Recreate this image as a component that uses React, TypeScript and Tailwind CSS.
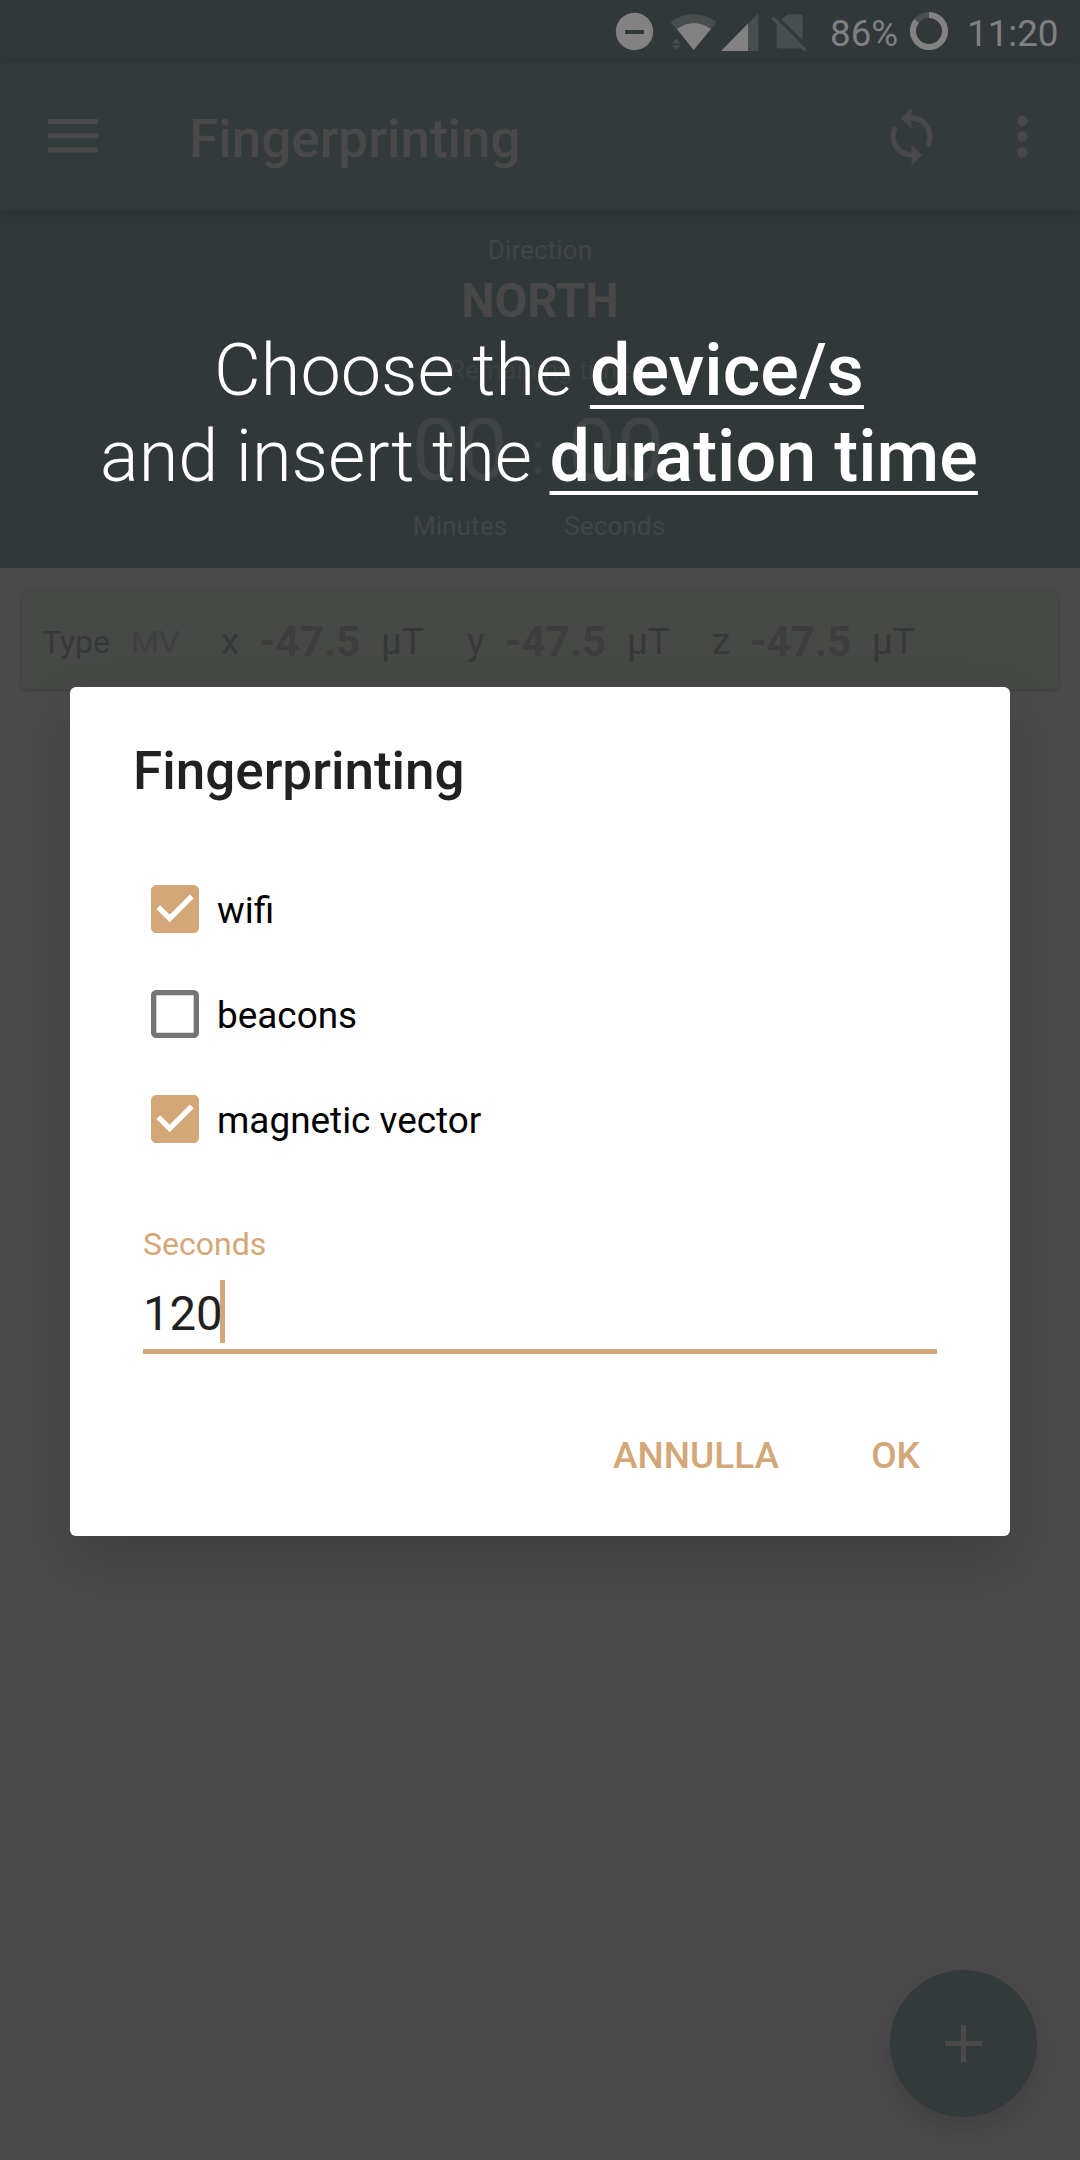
import React from "react";

const readings = [
  { axis: "x", value: "-47.5", width: "w-[246px]" },
  { axis: "y", value: "-47.5", width: "w-[245px]" },
  { axis: "z", value: "-47.5", width: "w-[245px]" },
];

const sensors = [
  { label: "wifi", checked: true },
  { label: "beacons", checked: false },
  { label: "magnetic vector", checked: true },
];

function StatusBar() {
  return (
    <div className="flex h-[63px] items-start bg-[#31383a] pl-[615px] text-[36.75px] leading-[67px] text-[#808080]">
      <svg className="h-[63px] w-[213px] shrink-0" viewBox="615 0 213 63">
        <circle cx="634.5" cy="31.5" r="18.7" fill="#828282" />
        <rect x="625" y="30" width="19" height="4" fill="#31383a" />
        <path d="M670.5 22Q693.7 6 716.5 22L693.7 50Z" fill="#484d4d" />
        <path d="M677 29Q693.7 17 711 29L693.7 50Z" fill="#828282" />
        <path d="M672 43.5l4.3-5 4.3 5zM672 45.3h8.600l-4.300 5z" fill="#484d4d" />
        <path d="M721 51L758.500 13V51Z" fill="#484d4d" />
        <path d="M721 51L748 23.500V51Z" fill="#828282" />
        <path d="M781.500 19.500l4.500-4q1.500-1.200 3-1.200h10.700q3 0 3 3V40.500ZM776.500 22L801 48.500H779.500q-3 0-3-3Z" fill="#484d4d" />
        <path d="M773.500 18.500L804.500 49.500" stroke="#484d4d" strokeWidth="3.500" strokeLinecap="round" />
      </svg>
      <span className="w-[82px] pl-[2px]">86%</span>
      <svg className="h-[63px] w-[38px] shrink-0" viewBox="0 0 38 63">
        <circle cx="19" cy="31" r="16" fill="none" stroke="#484d4d" strokeWidth="6" />
        <circle cx="19" cy="31" r="16" fill="none" stroke="#828282" strokeWidth="6" pathLength="100" strokeDasharray="86 14" transform="rotate(-90 19 31)" />
      </svg>
      <span className="pl-[19px]">11:20</span>
    </div>
  );
}

function Toolbar() {
  return (
    <header className="relative z-10 flex h-[147px] items-center bg-[#333a3b] text-[#494949] shadow-[0_4px_9px_rgba(40,40,35,0.3)]">
      <svg className="-mt-px ml-[48px] h-[34px] w-[50px]" viewBox="0 0 50 34" fill="currentColor">
        <path d="M0 0h50v5H0zM0 14.300h50v5H0zM0 28.500h50v5H0z" />
      </svg>
      <h1 className="ml-[91px] mt-[4px] grow text-[53px] font-medium leading-[62px]">Fingerprinting</h1>
      <svg className="mr-[48px] h-[63px] w-[63px]" viewBox="0 0 24 24" fill="currentColor">
        <path d="M12 4V1L8 5l4 4V6c3.310 0 6 2.690 6 6 0 1.010-.25 1.970-.7 2.800l1.460 1.460C19.540 15.030 20 13.570 20 12c0-4.420-3.580-8-8-8zm0 14c-3.310 0-6-2.690-6-6 0-1.010.25-1.970.7-2.800L5.240 7.740C4.460 8.970 4 10.430 4 12c0 4.420 3.580 8 8 8v3l4-4-4-4v3z" />
      </svg>
      <svg className="mr-[26px] h-[63px] w-[63px]" viewBox="0 0 24 24" fill="currentColor">
        <path d="M12 8c1.100 0 2-.9 2-2s-.9-2-2-2-2 .9-2 2 .9 2 2 2zm0 2c-1.100 0-2 .9-2 2s.9 2 2 2 2-.9 2-2-.9-2-2-2zm0 6c-1.100 0-2 .9-2 2s.9 2 2 2 2-.9 2-2-.9-2-2-2z" />
      </svg>
    </header>
  );
}

function DirectionPanel() {
  return (
    <section className="flex h-[358px] flex-col items-center bg-[#31383a] pt-[25px] text-[26.25px] leading-[30px] text-[#414545]">
      <div>Direction</div>
      <div className="mt-[8px] text-[47.25px] font-bold leading-[56px] text-[#484848]">NORTH</div>
      <div className="mt-[26px] text-[#3c4141]">Remaining time</div>
      <div className="mr-[4px] mt-[15px] flex h-[100px] w-[253px] justify-between text-[86px] leading-[100px] text-[#414444]">
        <span>00</span>
        <span className="text-[60px] leading-[106px] text-[#3c4141]">:</span>
        <span>00</span>
      </div>
      <div className="mr-[2px] mt-[11px] flex gap-[57px]">
        <span>Minutes</span>
        <span>Seconds</span>
      </div>
    </section>
  );
}

function ReadingCard() {
  return (
    <section className="mx-[22px] mt-[23px] flex h-[98px] items-center rounded-[5px] bg-[#474946] pl-[20px] text-[36.75px] leading-[44px] text-[#373838] shadow-[0_1px_4px_rgba(0,0,0,0.2)]">
      <span className="mt-[3px] w-[89px] text-[32px]">Type</span>
      <span className="mt-[3px] w-[90px] text-[32px] text-[#3e4040]">MV</span>
      {readings.map((r) => (
        <div key={r.axis} className={"mt-[3px] flex items-center " + r.width}>
          <span className="w-[38px]">{r.axis}</span>
          <span className="w-[122px] text-[42px] font-bold text-[#3c3d3c]">{r.value}</span>
          <span>µT</span>
        </div>
      ))}
    </section>
  );
}

function CheckBox({ checked }: { checked: boolean }) {
  return (
    <svg className="h-[48px] w-[48px]" viewBox="3 3 18 18">
      {checked ? (
        <path d="M19 3H5c-1.110 0-2 .9-2 2v14c0 1.100.89 2 2 2h14c1.110 0 2-.9 2-2V5c0-1.100-.89-2-2-2zm-9 14l-5-5 1.410-1.410L10 14.170l7.590-7.590L19 8l-9 9z" fill="#d3a777" />
      ) : (
        <path d="M19 5v14H5V5h14m0-2H5c-1.100 0-2 .9-2 2v14c0 1.100.9 2 2 2h14c1.100 0 2-.9 2-2V5c0-1.100-.9-2-2-2z" fill="#757575" />
      )}
    </svg>
  );
}

function Dialog() {
  return (
    <section className="absolute left-[70px] top-[686.5px] flex h-[849px] w-[940px] flex-col rounded-[6px] bg-white shadow-[0_24px_60px_rgba(0,0,0,0.14)]">
      <h2 className="ml-[63px] mt-[53.5px] text-[53px] font-medium leading-[62px] text-[#212121]">Fingerprinting</h2>
      <div className="ml-[81px] mt-[54px]">
        {sensors.map((s) => (
          <label key={s.label} className="flex h-[105px] items-center gap-[18px] text-[36.9px] leading-[44px] text-black">
            <CheckBox checked={s.checked} />
            <span className="mt-[5px]">{s.label}</span>
          </label>
        ))}
      </div>
      <div className="ml-[73px] mt-[54px] w-[794px] border-b-[5px] border-[#d3a777]">
        <div className="text-[32px] leading-[38px] text-[#d3a777]">Seconds</div>
        <div className="mt-[17px] flex h-[69px] items-start text-[47.25px] leading-[68px] text-[#212121]">
          <span className="w-[77px]">120</span>
          <span className="h-[63px] w-[5px] bg-[#d3a777]" />
        </div>
      </div>
      <div className="mt-[80px] flex justify-end pr-[90px] text-[37px] font-medium leading-[44px] text-[#d3a777]">
        <span className="mr-[92px]">ANNULLA</span>
        <span>OK</span>
      </div>
    </section>
  );
}

function Caption() {
  return (
    <p className="absolute left-[-1px] top-[328px] w-[1080px] text-center text-[72px] font-light leading-[86px] text-white">
      Choose the{" "}
      <span className="font-medium underline decoration-[4px] underline-offset-[10px] [text-decoration-skip-ink:none]">device/s</span>
      <br />
      and insert the{" "}
      <span className="font-medium underline decoration-[4px] underline-offset-[10px] [text-decoration-skip-ink:none]">duration time</span>
    </p>
  );
}

export default function App() {
  return (
    <main className="relative h-[2160px] w-[1080px] overflow-hidden bg-[#4a4a4a] font-['Roboto',sans-serif]">
      <StatusBar />
      <Toolbar />
      <DirectionPanel />
      <ReadingCard />
      <button className="absolute left-[890px] top-[1970px] flex h-[147px] w-[147px] items-center justify-center rounded-full bg-[#333a3b] shadow-[0_12px_24px_rgba(0,0,0,0.12)]">
        <svg className="h-[37px] w-[37px]" viewBox="0 0 37 37" fill="#4a4a4a">
          <path d="M16 0h5v16h16v5H21v16h-5V21H0v-5h16z" />
        </svg>
      </button>
      <Dialog />
      <Caption />
    </main>
  );
}
